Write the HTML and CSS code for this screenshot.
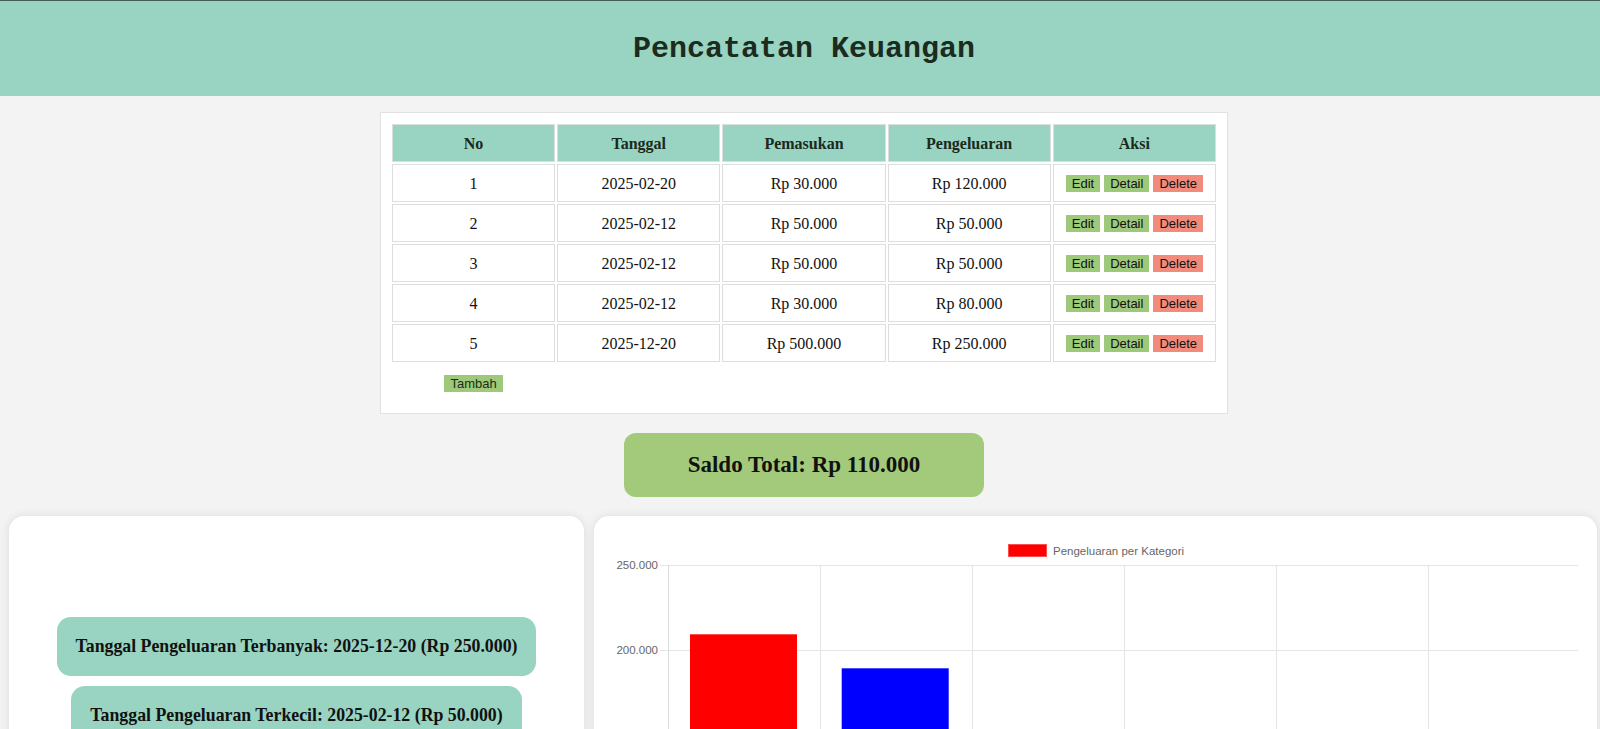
FILE: index.html
```html
<!DOCTYPE html>
<html lang="id">
<head>
<meta charset="utf-8">
<title>Pencatatan Keuangan</title>
<link rel="stylesheet" href="styles.css">
</head>
<body>
<header class="site-header">
  <h1 class="site-title">Pencatatan Keuangan</h1>
</header>
<main class="page">
  <section class="table-box">
    <table class="ledger">
      <thead>
        <tr><th>No</th><th>Tanggal</th><th>Pemasukan</th><th>Pengeluaran</th><th>Aksi</th></tr>
      </thead>
      <tbody>
        <tr><td>1</td><td>2025-02-20</td><td>Rp 30.000</td><td>Rp 120.000</td><td><button class="btn btn-green">Edit</button> <button class="btn btn-green">Detail</button> <button class="btn btn-red">Delete</button></td></tr>
        <tr><td>2</td><td>2025-02-12</td><td>Rp 50.000</td><td>Rp 50.000</td><td><button class="btn btn-green">Edit</button> <button class="btn btn-green">Detail</button> <button class="btn btn-red">Delete</button></td></tr>
        <tr><td>3</td><td>2025-02-12</td><td>Rp 50.000</td><td>Rp 50.000</td><td><button class="btn btn-green">Edit</button> <button class="btn btn-green">Detail</button> <button class="btn btn-red">Delete</button></td></tr>
        <tr><td>4</td><td>2025-02-12</td><td>Rp 30.000</td><td>Rp 80.000</td><td><button class="btn btn-green">Edit</button> <button class="btn btn-green">Detail</button> <button class="btn btn-red">Delete</button></td></tr>
        <tr><td>5</td><td>2025-12-20</td><td>Rp 500.000</td><td>Rp 250.000</td><td><button class="btn btn-green">Edit</button> <button class="btn btn-green">Detail</button> <button class="btn btn-red">Delete</button></td></tr>
        <tr class="add-row"><td><button class="btn btn-green btn-add">Tambah</button></td><td></td><td></td><td></td><td></td></tr>
      </tbody>
    </table>
  </section>

  <div class="saldo">Saldo Total: Rp 110.000</div>

  <section class="bottom">
    <div class="card card-info">
      <div class="info-box">Tanggal Pengeluaran Terbanyak: 2025-12-20 (Rp 250.000)</div>
      <div class="info-box">Tanggal Pengeluaran Terkecil: 2025-02-12 (Rp 50.000)</div>
    </div>
    <div class="card card-chart">
      <svg class="chart" width="1003" height="470" viewBox="0 0 1003 470" xmlns="http://www.w3.org/2000/svg">
        <rect x="414.5" y="28.5" width="38" height="12" fill="#ff0000" stroke="#ff4d4d" stroke-width="1"/>
        <text x="459" y="38.5" class="chart-text">Pengeluaran per Kategori</text>
        <g stroke="#e5e5e5" stroke-width="1">
          <line x1="66" y1="49.5" x2="984" y2="49.5"/>
          <line x1="66" y1="134.5" x2="984" y2="134.5"/>
          <line x1="66" y1="219.5" x2="984" y2="219.5"/>
          <line x1="66" y1="304.5" x2="984" y2="304.5"/>
          <line x1="66" y1="389.5" x2="984" y2="389.5"/>
          <line x1="226.5" y1="49" x2="226.5" y2="460"/>
          <line x1="378.5" y1="49" x2="378.5" y2="460"/>
          <line x1="530.5" y1="49" x2="530.5" y2="460"/>
          <line x1="682.5" y1="49" x2="682.5" y2="460"/>
          <line x1="834.5" y1="49" x2="834.5" y2="460"/>
        </g>
        <line x1="74.5" y1="49" x2="74.5" y2="460" stroke="#dcdcdc" stroke-width="1"/>
        <text x="64" y="53" text-anchor="end" class="chart-text">250.000</text>
        <text x="64" y="138" text-anchor="end" class="chart-text">200.000</text>
        <text x="64" y="223" text-anchor="end" class="chart-text">150.000</text>
        <text x="64" y="308" text-anchor="end" class="chart-text">100.000</text>
        <text x="64" y="393" text-anchor="end" class="chart-text">50.000</text>
        <rect x="96" y="118.3" width="107" height="341.7" fill="#ff0000"/>
        <rect x="247.7" y="152.3" width="107" height="307.7" fill="#0000ff"/>
      </svg>
    </div>
  </section>
</main>
</body>
</html>
```
FILE: styles.css
```css
html {
  scrollbar-width: none;
}

body {
  margin: 0;
  background: #f3f3f3;
  font-family: "Liberation Serif", "Times New Roman", serif;
  color: #111;
}

.site-header {
  height: 96px;
  box-sizing: border-box;
  border-top: 1px solid #4a5a57;
  background: #99d3c1;
  display: flex;
  align-items: center;
  justify-content: center;
  padding-left: 8px;
}

.site-title {
  margin: 0;
  font-family: "Liberation Mono", "Courier New", monospace;
  font-size: 30px;
  font-weight: bold;
  color: #1b2b1e;
}

.page {
  padding-left: 8px;
  padding-top: 16px;
}

.table-box {
  width: 848px;
  box-sizing: border-box;
  margin: 0 auto;
  padding: 9px;
  background: #fff;
  border: 1px solid #e2e2e2;
}

.ledger {
  width: 100%;
  table-layout: fixed;
  border-spacing: 2px;
  font-size: 16px;
}

.ledger th,
.ledger td {
  border: 1px solid #dedede;
  padding: 10px 10px 8px;
  line-height: 18px;
  text-align: center;
}

.ledger th {
  background: #99d3c1;
  color: #1a2a1c;
  font-weight: bold;
}

.ledger .add-row td {
  border-color: transparent;
}

.btn {
  font-family: "Liberation Sans", Arial, sans-serif;
  font-size: 13px;
  border: none;
  padding: 1px 6px;
  color: #111;
  vertical-align: top;
  line-height: 15px;
}

.btn-green {
  background: #9ec87a;
}

.btn-red {
  background: #f28b7b;
}

.btn-add {
  color: #1a2e14;
}

.saldo {
  width: 360px;
  box-sizing: border-box;
  margin: 19px auto 0;
  padding: 19px 10px;
  background: #a3c97b;
  border-radius: 12px;
  text-align: center;
  font-size: 23px;
  font-weight: bold;
  color: #111;
}

.bottom {
  display: grid;
  grid-template-columns: 575px 1003px;
  gap: 10px;
  margin-top: 19px;
  margin-left: 1px;
}

.card {
  background: #fff;
  border-radius: 15px;
  box-shadow: 0 0 10px rgba(0, 0, 0, 0.1);
  height: 480px;
}

.card-info {
  display: flex;
  flex-direction: column;
  align-items: center;
  padding-top: 101px;
  box-sizing: border-box;
}

.info-box {
  background: #99d3c1;
  border-radius: 14px;
  padding: 19px 19px;
  font-size: 17.8px;
  font-weight: bold;
  color: #111;
  margin-bottom: 10px;
}

.chart {
  display: block;
}

.chart-text {
  font-family: "Liberation Sans", Arial, sans-serif;
  font-size: 11.5px;
  fill: #666;
}
```
